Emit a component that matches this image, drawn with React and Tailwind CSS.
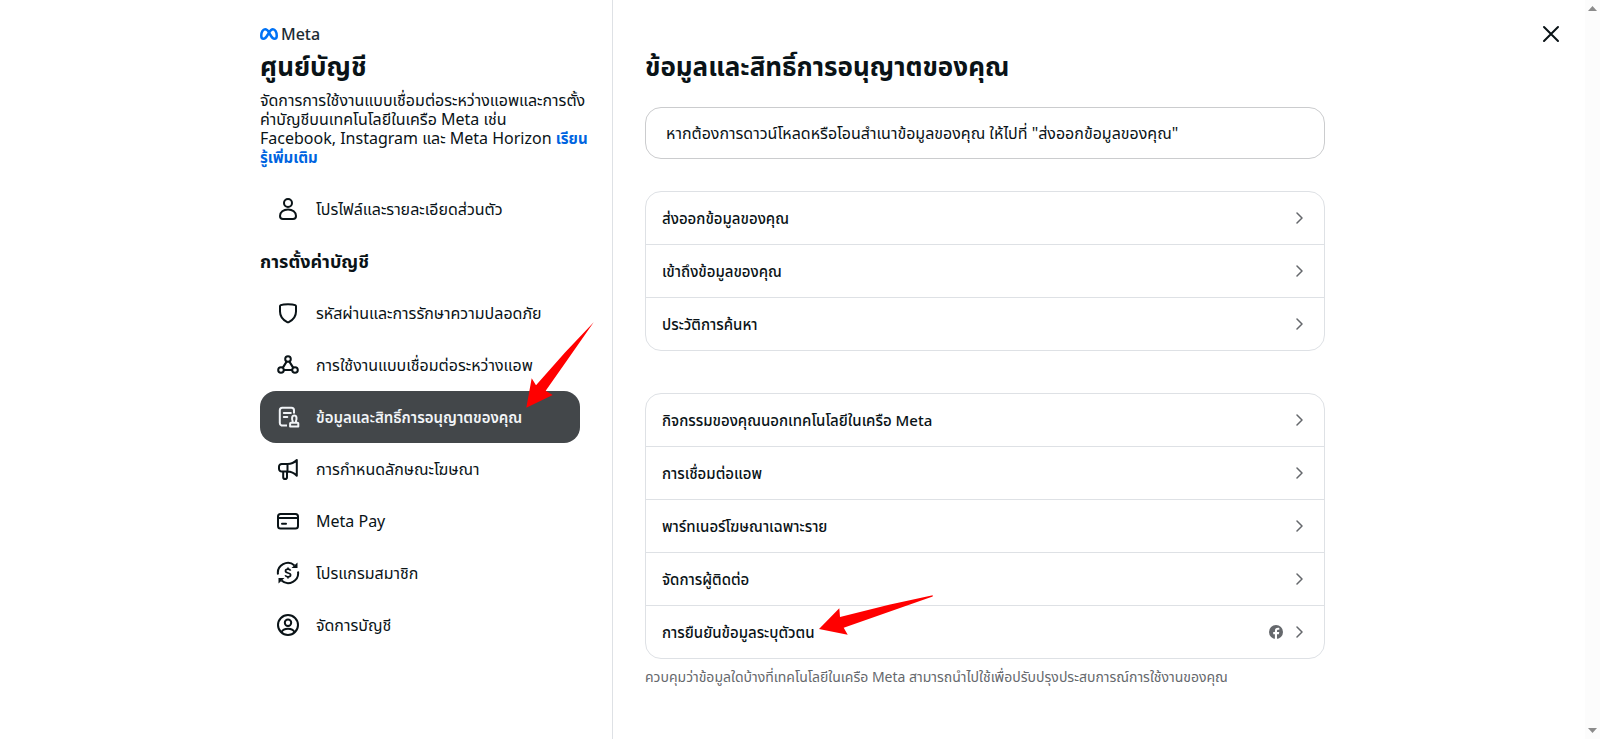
import React from 'react';
import clsx from 'clsx';

const iconProps = {
  viewBox: '0 0 24 24',
  fill: 'none',
  stroke: 'currentColor',
  strokeWidth: 2,
  strokeLinejoin: 'round',
  className: 'w-6 h-6 shrink-0',
  'aria-hidden': true,
};

const ProfileIcon = () => (
  <svg {...iconProps}>
    <circle cx="12" cy="6" r="4" />
    <path d="M12 12.5c-4.6 0-8 2.6-8 6.400 0 2 1 3.100 3 3.100h10c2 0 3-1.100 3-3.100 0-3.800-3.400-6.400-8-6.400z" />
  </svg>
);

const ShieldIcon = () => (
  <svg {...iconProps}>
    <path d="M12 3.200c3.200 0 6.200.5 7.200.9.500.2.800.600.800 1.200v5.200c0 4.600-3.300 8.600-7.200 10.600-.5.300-1.100.3-1.600 0C7.300 19.100 4 15.100 4 10.500V5.300c0-.600.300-1 .8-1.200 1-.4 4-.9 7.200-.9z" />
  </svg>
);

const ConnectedIcon = () => (
  <svg {...iconProps}>
    <circle cx="12" cy="6" r="2.800" />
    <circle cx="5" cy="17" r="2.800" />
    <circle cx="19" cy="17" r="2.800" />
    <path d="M10.700 8.500 6.700 14.800M13.300 8.500l4 6.300M7.800 17h8.400" strokeWidth="2.200" />
  </svg>
);

const InfoPermissionIcon = () => (
  <svg {...iconProps}>
    <path d="M11 20.500H5.500A2.500 2.500 0 0 1 3.800 18V5.300A2.500 2.500 0 0 1 6.300 2.800h9.200A2.500 2.500 0 0 1 18 5.300V8.500" />
    <path d="M7.800 8h7M7.800 12h3.500" strokeLinecap="round" />
    <path d="M16.600 17.200v-1.200c-.8-2-1-5.500 1.700-5.500s2.500 3.500 1.700 5.500v1.200M15 17.700h6.500a.8.8 0 0 1 .8.800v3h-8.200v-3a.8.8 0 0 1 .9-.8z" />
  </svg>
);

const MegaphoneIcon = () => (
  <svg {...iconProps}>
    <path d="M20.800 3v15.800c-2.600-2.800-5.300-4.300-9.300-4.300H5.700a2.700 2.700 0 0 1-2.700-2.700V9.700A2.700 2.700 0 0 1 5.700 7h5.800c4 0 6.700-1.300 9.300-4zM11.500 7v7.500M7.200 14.500v5.700c0 1 .8 1.800 1.900 1.800s1.900-.8 1.900-1.800v-5.700" />
  </svg>
);

const CardIcon = () => (
  <svg {...iconProps}>
    <rect x="2" y="5" width="20" height="14.500" rx="2.500" />
    <path d="M2 9h20" />
    <path d="M6 14.800h4" strokeLinecap="round" />
  </svg>
);

const SubscriptionIcon = () => (
  <svg {...iconProps}>
    <path d="M2 13.500A10 10 0 0 1 18.500 4.500M22 10.500A10 10 0 0 1 5.500 19.500" />
    <path d="M21.500 1.500V7H15.500zM2.500 22.500V17H8.500z" fill="currentColor" stroke="none" />
    <path d="M14.600 9.600c-.5-1-1.500-1.400-2.600-1.400-1.400 0-2.500.7-2.500 1.900 0 2.700 5.100 1.100 5.100 3.800 0 1.200-1.200 1.900-2.600 1.900-1.300 0-2.400-.6-2.800-1.600M12 6.500v1.700M12 15.800v1.700" strokeWidth="1.700" />
  </svg>
);

const ManageIcon = () => (
  <svg {...iconProps}>
    <circle cx="12" cy="12" r="10" />
    <circle cx="12" cy="9.800" r="3.200" />
    <path d="M5.500 19.200c1-2.200 3.500-3.400 6.500-3.400s5.500 1.200 6.500 3.400" />
  </svg>
);

const ChevronIcon = () => (
  <svg viewBox="0 0 12 12" fill="none" stroke="#65686c" strokeWidth="1.500" strokeLinecap="round" strokeLinejoin="round" className="w-3 h-3" aria-hidden="true">
    <path d="M4 1l5 5-5 5" />
  </svg>
);

const FacebookIcon = () => (
  <svg viewBox="0 0 24 24" className="w-3.5 h-3.5" aria-hidden="true">
    <circle cx="12" cy="12" r="12" fill="#65686c" />
    <path fill="#fff" d="M10.100 24v-8.200H7.200v-3.600h2.900v-1.600c0-4 1.800-5.800 5.600-5.800.8 0 1.500.1 2 .2v3.300h-1.400c-1.900 0-2.600.7-2.600 2.500v1.400h3.900l-.7 3.600h-3.200V24z" />
  </svg>
);

const MetaMark = () => (
  <svg viewBox="0 0 36 24" fill="none" stroke="#0072f5" strokeWidth="5" className="h-3 w-[18px]" aria-hidden="true">
    <path d="M18 8.500C15.500 4.500 13 2.500 10.200 2.500 5.800 2.500 2.500 8.800 2.500 15.300c0 4 1.700 6.200 4.600 6.200 3 0 5-2.200 8.400-8.000L18 9c3-5 5-6.500 7.800-6.500 4.400 0 7.700 6.300 7.700 12.800 0 4-1.700 6.200-4.600 6.200-3 0-5-2.200-8.400-8.000z" />
  </svg>
);

const settings = [
  { icon: ShieldIcon, label: 'รหัสผ่านและการรักษาความปลอดภัย' },
  { icon: ConnectedIcon, label: 'การใช้งานแบบเชื่อมต่อระหว่างแอพ' },
  { icon: InfoPermissionIcon, label: 'ข้อมูลและสิทธิ์การอนุญาตของคุณ', active: true },
  { icon: MegaphoneIcon, label: 'การกำหนดลักษณะโฆษณา' },
  { icon: CardIcon, label: 'Meta Pay' },
  { icon: SubscriptionIcon, label: 'โปรแกรมสมาชิก' },
  { icon: ManageIcon, label: 'จัดการบัญชี' },
];

const infoRows = [
  { label: 'ส่งออกข้อมูลของคุณ' },
  { label: 'เข้าถึงข้อมูลของคุณ' },
  { label: 'ประวัติการค้นหา' },
];

const permissionRows = [
  { label: 'กิจกรรมของคุณนอกเทคโนโลยีในเครือ Meta' },
  { label: 'การเชื่อมต่อแอพ' },
  { label: 'พาร์ทเนอร์โฆษณาเฉพาะราย' },
  { label: 'จัดการผู้ติดต่อ' },
  { label: 'การยืนยันข้อมูลระบุตัวตน', facebook: true, marked: true },
];

const NavItem = ({ icon: Icon, label, active }) => (
  <li className="relative">
    <a
      href="#"
      aria-current={active ? 'page' : undefined}
      className={clsx(
        'flex items-center gap-4 h-[52px] px-4 rounded-2xl whitespace-nowrap',
        active ? 'bg-[#43474a] text-[#f1f4f7] text-[15px] font-semibold' : 'text-base hover:bg-gray-100'
      )}
    >
      <Icon />
      {label}
    </a>
    {active && (
      <svg viewBox="0 0 68 86" className="absolute left-[266px] -top-[69px] w-[68px] h-[86px] pointer-events-none" aria-hidden="true">
        <path fill="#f00" d="M67.700.3 39 30.500 10 63.300 5.700 56.300.3 85.700 26.700 73 19.700 68.700 42 37z" />
      </svg>
    )}
  </li>
);

const RowCard = ({ rows }) => (
  <ul className="border border-[#dee1e5] rounded-2xl divide-y divide-[#dee1e5]">
    {rows.map((row) => (
      <li key={row.label} className="relative">
        <button type="button" className="flex items-center w-full h-[52px] px-4 text-left font-medium cursor-pointer">
          <span className="flex-1">{row.label}</span>
          {row.facebook && <FacebookIcon />}
          <span className="ml-2.5 mr-[3px]">
            <ChevronIcon />
          </span>
        </button>
        {row.marked && (
          <svg viewBox="0 0 114 40" className="absolute left-[173px] -top-[11px] w-[114px] h-10 pointer-events-none" aria-hidden="true">
            <path fill="#f00" d="M113.700.3 70 9.700 21 22 20.300 13.300 0 34 28.700 39.700 24.700 32.700 113.700 1.500z" />
          </svg>
        )}
      </li>
    ))}
  </ul>
);

const App = () => (
  <div className="flex min-h-screen bg-white text-[#0a1317] text-[15px] leading-[18px] font-['Noto_Sans','Noto_Sans_Thai',sans-serif]">
    <div className="relative flex-1 min-w-0">
      <div className="flex max-w-[1065px] min-h-screen mx-auto">
        <aside className="w-[353px] shrink-0 pt-7 pr-8 border-r border-[#dee1e5]">
          <div className="flex items-center gap-[3px] h-3 text-[#1c2b33]">
            <MetaMark />
            <span className="text-base leading-3 font-medium">Meta</span>
          </div>
          <h1 className="mt-3 text-[26px] leading-7 font-bold">ศูนย์บัญชี</h1>
          <p className="mt-[11px] -mr-4 text-base leading-[19px]">
            จัดการการใช้งานแบบเชื่อมต่อระหว่างแอพและการตั้ง
            <br />
            ค่าบัญชีบนเทคโนโลยีในเครือ Meta เช่น
            <br />
            Facebook, Instagram และ Meta Horizon{' '}
            <a href="#" className="text-[15px] font-bold text-[#0064e0]">
              เรียน
              <br />
              รู้เพิ่มเติม
            </a>
          </p>
          <nav className="mt-4">
            <ul>
              <NavItem icon={ProfileIcon} label="โปรไฟล์และรายละเอียดส่วนตัว" />
            </ul>
            <h2 className="my-4 text-lg leading-5 font-bold">การตั้งค่าบัญชี</h2>
            <ul>
              {settings.map((item) => (
                <NavItem key={item.label} {...item} />
              ))}
            </ul>
          </nav>
        </aside>

        <main className="flex-1 min-w-0 pl-8 pt-[52px] pb-12">
          <h2 className="text-[26px] leading-7 font-bold">ข้อมูลและสิทธิ์การอนุญาตของคุณ</h2>
          <div className="mt-[27px] px-5 py-4 text-base leading-[18px] border border-[#cbccce] rounded-2xl">
            หากต้องการดาวน์โหลดหรือโอนสำเนาข้อมูลของคุณ ให้ไปที่ "ส่งออกข้อมูลของคุณ"
          </div>
          <div className="mt-8">
            <RowCard rows={infoRows} />
          </div>
          <div className="mt-[42px]">
            <RowCard rows={permissionRows} />
          </div>
          <p className="mt-2 text-sm leading-5 text-[#65686c]">
            ควบคุมว่าข้อมูลใดบ้างที่เทคโนโลยีในเครือ Meta สามารถนำไปใช้เพื่อปรับปรุงประสบการณ์การใช้งานของคุณ
          </p>
        </main>
      </div>

      <button type="button" aria-label="ปิด" className="absolute top-[22px] right-[22px] w-6 h-6 cursor-pointer">
        <svg viewBox="0 0 24 24" fill="none" stroke="currentColor" strokeWidth="2" strokeLinecap="round" className="w-6 h-6" aria-hidden="true">
          <path d="M5 5l14 14M19 5L5 19" />
        </svg>
      </button>
    </div>

    {/* Scroll track */}
    <div className="flex flex-col justify-between items-center w-[15px] shrink-0 py-1.5 bg-[#fcfcfc]" aria-hidden="true">
      <svg viewBox="0 0 9 5" className="w-[9px] h-[5px]"><path fill="#8b8b8b" d="M0 5 4.500 0 9 5z" /></svg>
      <svg viewBox="0 0 9 5" className="w-[9px] h-[5px]"><path fill="#8b8b8b" d="M0 0 4.500 5 9 0z" /></svg>
    </div>
  </div>
);

export default App;
